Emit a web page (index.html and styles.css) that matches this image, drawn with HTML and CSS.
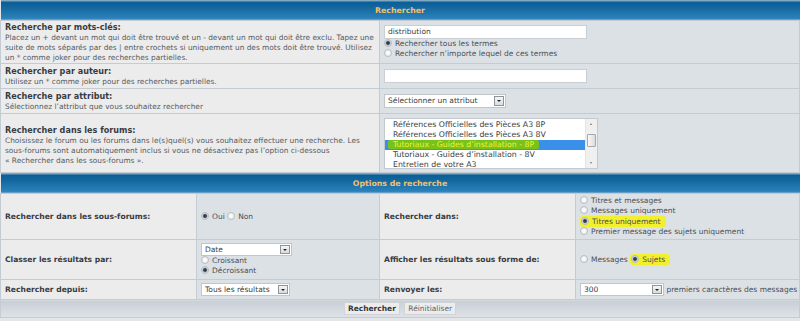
FILE: index.html
```html
<!DOCTYPE html>
<html lang="fr">
<head>
<meta charset="UTF-8">
<title>Rechercher</title>
<link rel="stylesheet" href="styles.css">
</head>
<body>
<div class="panel">
<!-- Recherche principale -->
<table class="tbl main">
<colgroup><col class="c-left"><col></colgroup>
<tr class="h-cat"><th colspan="2">Rechercher</th></tr>
<tr class="h-r1">
<td class="lbl"><b>Recherche par mots-clés:</b><br><span class="explain">Placez un + devant un mot qui doit être trouvé et un - devant un mot qui doit être exclu. Tapez une<br>suite de mots séparés par des | entre crochets si uniquement un des mots doit être trouvé. Utilisez<br>un * comme joker pour des recherches partielles.</span></td>
<td class="val">
<div class="field">distribution</div>
<div class="opt"><span class="radio on"></span>Rechercher tous les termes</div>
<div class="opt"><span class="radio"></span>Rechercher n’importe lequel de ces termes</div>
</td>
</tr>
<tr class="h-r2">
<td class="lbl"><b>Rechercher par auteur:</b><br><span class="explain">Utilisez un * comme joker pour des recherches partielles.</span></td>
<td class="val"><div class="field"></div></td>
</tr>
<tr class="h-r3">
<td class="lbl"><b>Recherche par attribut:</b><br><span class="explain">Sélectionnez l’attribut que vous souhaitez rechercher</span></td>
<td class="val"><div class="select w-attr"><span class="sel-text">Sélectionner un attribut</span><span class="arrow"></span></div></td>
</tr>
<tr class="h-r4">
<td class="lbl"><b>Rechercher dans les forums:</b><br><span class="explain">Choisissez le forum ou les forums dans le(s)quel(s) vous souhaitez effectuer une recherche. Les<br>sous-forums sont automatiquement inclus si vous ne désactivez pas l’option ci-dessous<br>« Rechercher dans les sous-forums ».</span></td>
<td class="val">
<div class="listbox">
<div class="items">
<div class="item">Références Officielles des Pièces A3 8P</div>
<div class="item">Références Officielles des Pièces A3 8V</div>
<div class="item selected"><span class="mark">Tutoriaux - Guides d’installation - 8P</span></div>
<div class="item">Tutoriaux - Guides d’installation - 8V</div>
<div class="item">Entretien de votre A3</div>
</div>
<div class="scrollbar">
<span class="sb-up"></span>
<span class="sb-track"><span class="sb-thumb"></span></span>
<span class="sb-down"></span>
</div>
</div>
</td>
</tr>
</table>

<!-- Options de recherche -->
<table class="tbl options">
<colgroup><col class="c1"><col class="c2"><col class="c3"><col></colgroup>
<tr class="h-cat"><th colspan="4">Options de recherche</th></tr>
<tr class="h-r5">
<td class="lbl"><b>Rechercher dans les sous-forums:</b></td>
<td class="val"><span class="radio on"></span>Oui <span class="radio"></span>Non</td>
<td class="lbl"><b>Rechercher dans:</b></td>
<td class="val">
<div class="opt"><span class="radio"></span>Titres et messages</div>
<div class="opt"><span class="radio"></span>Messages uniquement</div>
<div class="opt"><span class="hl"><span class="radio on"></span>Titres uniquement</span></div>
<div class="opt"><span class="radio"></span>Premier message des sujets uniquement</div>
</td>
</tr>
<tr class="h-r6">
<td class="lbl"><b>Classer les résultats par:</b></td>
<td class="val">
<div class="select w-date"><span class="sel-text">Date</span><span class="arrow"></span></div>
<div class="opt"><span class="radio"></span>Croissant</div>
<div class="opt"><span class="radio on"></span>Décroissant</div>
</td>
<td class="lbl"><b>Afficher les résultats sous forme de:</b></td>
<td class="val"><span class="radio"></span>Messages <span class="hl"><span class="radio on"></span>Sujets</span></td>
</tr>
<tr class="h-r7">
<td class="lbl"><b>Rechercher depuis:</b></td>
<td class="val"><div class="select w-since"><span class="sel-text">Tous les résultats</span><span class="arrow"></span></div></td>
<td class="lbl"><b>Renvoyer les:</b></td>
<td class="val nowrap"><div class="select w-chars"><span class="sel-text">300</span><span class="arrow"></span></div> premiers caractères des messages</td>
</tr>
<tr class="h-foot">
<td colspan="4" class="cat-foot"><button class="btn main-btn">Rechercher</button> <button class="btn">Réinitialiser</button></td>
</tr>
</table>
</div>
</body>
</html>
```

FILE: styles.css
```css
body {
margin: 0;
padding: 0;
background-color: #e4e7ea;
font-family: 'DejaVu Sans', Verdana, sans-serif;
font-size: 7.5px;
color: #4a4f55;
}

.panel {
width: 800px;
}

.tbl {
width: 800px;
border-collapse: collapse;
table-layout: fixed;
}

.tbl td,
.tbl th {
border: 1px solid #c3ccd3;
padding: 0 4px;
vertical-align: middle;
}

.c-left {
width: 379px;
}

.c1 {
width: 196px;
}

.c2 {
width: 183px;
}

.c3 {
width: 196px;
}

/* blue header bars */
.h-cat th {
height: 20px;
padding: 0;
font-size: 7.8px;
font-weight: bold;
color: #f1c170;
text-align: center;
background: linear-gradient(#7fa8c3 0, #7fa8c3 1px, #0a5d96 2px, #15699f 40%, #2b82bb 92%, #7faacb 100%);
border: none;
}

.lbl {
background-color: #ececec;
color: #3a3e44;
}

.lbl b {
font-size: 7.6px;
color: #383c42;
}

.main .lbl b {
font-size: 8.1px;
line-height: 11px;
}

.val {
background-color: #dce1e5;
}

.nowrap {
white-space: nowrap;
padding-left: 3px;
}

.explain {
font-size: 7.4px;
line-height: 10px;
color: #555a60;
white-space: nowrap;
}

.main .lbl {
line-height: 10px;
}

.h-r1 { height: 43px; }
.h-r2 { height: 25px; }
.h-r3 { height: 25px; }
.h-r4 { height: 59px; }
.h-r5 { height: 46px; }
.h-r6 { height: 40px; }
.h-r7 { height: 20px; }
.h-foot { height: 18px; }

.h-r4 .lbl {
padding-top: 4px;
}

.field {
width: 198px;
height: 12px;
background: #fff;
border: 1px solid #c9cfd4;
padding-left: 3px;
line-height: 12px;
color: #3a3e44;
}

.opt {
line-height: 10.5px;
white-space: nowrap;
}

.radio {
display: inline-block;
width: 6px;
height: 6px;
border-radius: 50%;
border: 1px solid #b7bcc2;
background: radial-gradient(circle, #ffffff 0, #e3e6e9 100%);
vertical-align: -1px;
margin-right: 3px;
}

.radio.on {
background: radial-gradient(circle, #2f3d4d 0, #2f3d4d 1.4px, #b9c0c8 2.3px, #f4f5f6 3.5px);
}

.hl {
background-color: #f2ef2c;
padding: 1px 5px 1px 1px;
border-radius: 3px;
}

/* select boxes */
.select {
display: inline-flex;
align-items: stretch;
height: 13px;
background: #fff;
border: 1px solid #c0c6cc;
vertical-align: middle;
box-sizing: border-box;
}

.sel-text {
flex: 1;
padding-left: 3px;
line-height: 11px;
color: #3a3e44;
white-space: nowrap;
overflow: hidden;
}

.arrow {
width: 8px;
margin: 1px;
border: 1px solid #8d949b;
background: linear-gradient(#f6f6f6, #d8dcdf);
position: relative;
}

.arrow::after {
content: "";
position: absolute;
left: 2px;
top: 3px;
border-left: 2px solid transparent;
border-right: 2px solid transparent;
border-top: 2px solid #222;
}

.w-attr { width: 122px; height: 14px; }
.w-date { width: 91px; }
.w-since { width: 89px; }
.w-chars { width: 84px; }

.w-attr .sel-text { line-height: 12px; }

/* forum list */
.listbox {
display: flex;
width: 214px;
height: 51px;
background: #fff;
border: 1px solid #c3c9ce;
box-sizing: border-box;
}

.items {
flex: 1;
padding-top: 1px;
}

.item {
height: 10px;
line-height: 10px;
font-size: 7.8px;
padding-left: 8px;
color: #3a3e44;
white-space: nowrap;
}

.item.selected {
background-color: #3a8fe8;
padding-left: 3px;
}

.mark {
background-color: #78c21a;
color: #e8f43c;
padding: 0 5px;
border-radius: 2px;
}

.scrollbar {
width: 11px;
display: flex;
flex-direction: column;
background: #f0f0f0;
border-left: 1px solid #e6e6e6;
}

.sb-up,
.sb-down {
height: 10px;
position: relative;
}

.sb-up::after,
.sb-down::after {
content: "";
position: absolute;
left: 4px;
top: 4px;
border-left: 1.5px solid transparent;
border-right: 1.5px solid transparent;
}

.sb-up::after {
border-bottom: 2px solid #777;
}

.sb-down::after {
border-top: 2px solid #777;
}

.sb-track {
flex: 1;
position: relative;
}

.sb-thumb {
position: absolute;
left: 1px;
right: 1px;
top: 5px;
height: 11px;
background: linear-gradient(90deg, #f8f8f8, #dcdcdc);
border: 1px solid #a8a8a8;
border-radius: 1px;
}

/* footer */
.cat-foot {
text-align: center;
background: linear-gradient(#c7ced5, #dfe3e7);
padding: 0;
}

.btn {
font-family: 'DejaVu Sans', Verdana, sans-serif;
font-size: 7.5px;
height: 13px;
padding: 0 3px;
margin: 0 1px;
background: #ececec;
border: 1px solid #d0d4d8;
color: #5f646a;
line-height: 11px;
}

.main-btn {
font-weight: bold;
color: #33373c;
}
```
